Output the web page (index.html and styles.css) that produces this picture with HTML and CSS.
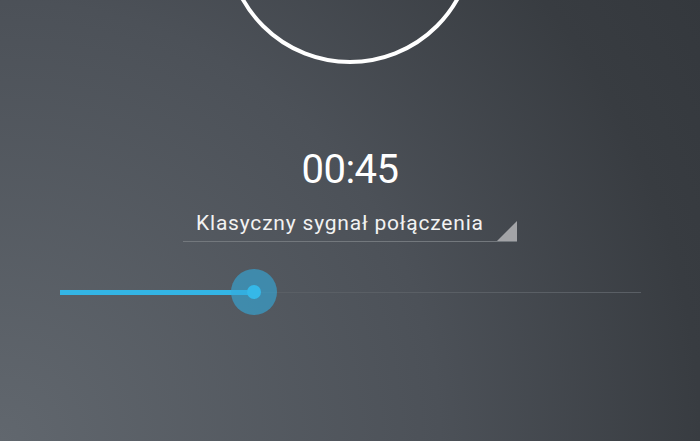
FILE: index.html
```html
<!DOCTYPE html>
<html lang="pl">
<head>
<meta charset="utf-8">
<title>Dzwonek</title>
<link rel="stylesheet" href="styles.css">
</head>
<body>
<main class="screen">
  <div class="ring"></div>
  <div class="time">00:45</div>
  <div class="spinner">
    <span class="spinner-label">Klasyczny sygnał połączenia</span>
  </div>
  <div class="slider">
    <div class="track-fill" style="width: 194px"></div>
    <div class="track-rest"></div>
    <div class="thumb" style="left: 171px"><span class="thumb-dot"></span></div>
  </div>
</main>
</body>
</html>
```
FILE: styles.css
```css
html, body {
  margin: 0;
  padding: 0;
  width: 700px;
  height: 441px;
  overflow: hidden;
}

body {
  font-family: Roboto, "Noto Sans", "Liberation Sans", sans-serif;
  color: #ffffff;
}

.screen {
  width: 700px;
  height: 441px;
  display: flex;
  flex-direction: column;
  align-items: center;
  background: radial-gradient(circle at 0% 100%, #61676e 0px, #4c5158 440px, #383c41 700px, #34383d 830px);
}

.ring {
  width: 242px;
  height: 242px;
  border: 4px solid #ffffff;
  border-radius: 50%;
  margin-top: -186px;
  flex: none;
}

.time {
  margin-top: 82px;
  font-size: 40px;
  line-height: 48px;
  font-weight: 400;
  letter-spacing: -0.5px;
}

.spinner {
  position: relative;
  margin-top: 17px;
  width: 321px;
  padding: 0 0 6px 13px;
  border-bottom: 1px solid #73787d;
}

.spinner::after {
  content: "";
  position: absolute;
  right: 0;
  bottom: 0;
  width: 0;
  height: 0;
  border-style: solid;
  border-width: 0 0 20px 20px;
  border-color: transparent transparent #a3a4a7 transparent;
}

.spinner-label {
  display: block;
  font-size: 21px;
  line-height: 24px;
  letter-spacing: 0.8px;
  color: #f2f2f2;
}

.slider {
  position: relative;
  margin-top: 27px;
  width: 581px;
  height: 46px;
  display: flex;
  align-items: center;
}

.track-fill {
  height: 5px;
  background: #33b5e5;
  flex: none;
}

.track-rest {
  flex: 1;
  height: 1px;
  background: #5a5f65;
}

.thumb {
  position: absolute;
  top: 0;
  width: 46px;
  height: 46px;
  border-radius: 50%;
  background: rgba(51, 170, 220, 0.62);
  display: flex;
  align-items: center;
  justify-content: center;
}

.thumb-dot {
  width: 14px;
  height: 14px;
  border-radius: 50%;
  background: #35b8e8;
}
```
